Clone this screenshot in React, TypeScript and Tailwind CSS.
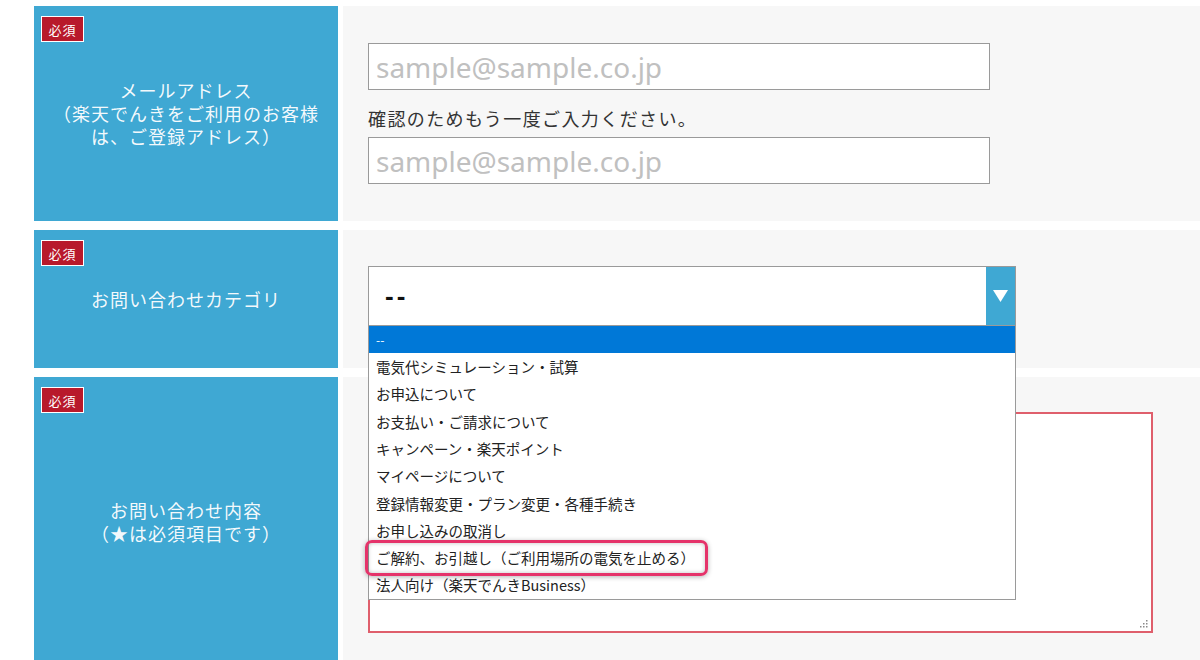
import type { ReactNode } from "react";

const jp = { fontFamily: '"Noto Sans CJK JP", "Noto Sans", sans-serif' };

const categories = [
  "--",
  "電気代シミュレーション・試算",
  "お申込について",
  "お支払い・ご請求について",
  "キャンペーン・楽天ポイント",
  "マイページについて",
  "登録情報変更・プラン変更・各種手続き",
  "お申し込みの取消し",
  "ご解約、お引越し（ご利用場所の電気を止める）",
  "法人向け（楽天でんきBusiness）",
];

function Badge() {
  return (
    <span className="absolute left-[7px] top-[10px] flex h-[26px] w-[43px] items-center justify-center border border-white bg-[#b8192b] text-[13px] text-white">
      必須
    </span>
  );
}

function Row({ label, className, children }: { label: ReactNode; className: string; children: ReactNode }) {
  return (
    <div className={`flex gap-[5px] ${className}`}>
      <div className="relative flex w-[304px] shrink-0 items-center justify-center bg-[#3fa8d3] px-[18px] text-center text-[18px] leading-[23px] tracking-[1px] text-white/95">
        <Badge />
        <p>{label}</p>
      </div>
      <div className="relative flex-1 bg-[#f7f7f7] pl-[25px]">{children}</div>
    </div>
  );
}

function EmailInput() {
  return (
    <input
      readOnly
      placeholder="sample@sample.co.jp"
      className="block h-[47px] w-[622px] border-[1.5px] border-[#9a9a9a] bg-white px-[7px] text-[28px] outline-none placeholder:text-[#c0c0c0]"
      style={{ fontFamily: '"Noto Sans", sans-serif' }}
    />
  );
}

function ResizeGrip() {
  return (
    <svg className="absolute bottom-[3px] right-[3px]" width="10" height="10" viewBox="0 0 10 10">
      {[
        [8, 2],
        [5, 5],
        [8, 5],
        [2, 8],
        [5, 8],
        [8, 8],
      ].map(([x, y]) => (
        <rect key={`${x}-${y}`} x={x} y={y} width="1.5" height="1.5" fill="#8a8a8a" />
      ))}
    </svg>
  );
}

export default function App() {
  return (
    <div className="h-[660px] w-[1200px] overflow-hidden bg-white pl-[34px] pt-[6px]" style={jp}>
      <div className="flex flex-col gap-[9px]">
        <Row
          className="h-[215px]"
          label={
            <>
              メールアドレス
              <br />
              （楽天でんきをご利用のお客様
              <br />
              は、ご登録アドレス）
            </>
          }
        >
          <div className="pt-[37px]">
            <EmailInput />
            <p className="mt-[16px] mb-[7px] text-[18px] leading-[24px] tracking-[1.4px] text-[#333]">
              確認のためもう一度ご入力ください。
            </p>
            <EmailInput />
          </div>
        </Row>

        <Row className="z-10 h-[138px]" label="お問い合わせカテゴリ">
          <div className="relative mt-[36px] w-[648px]">
            <div className="flex h-[60px] border border-[#9a9a9a] bg-white">
              <span
                className="flex flex-1 items-center pl-[16px] text-[26px] font-bold tracking-[3px] text-[#111]"
                style={{ fontFamily: '"Liberation Sans", sans-serif' }}
              >
                --
              </span>
              <span className="flex w-[29px] items-center justify-center bg-[#3fa8d3]">
                <svg width="15" height="12" viewBox="0 0 15 12">
                  <path d="M0 0H15L7.5 12Z" fill="white" />
                </svg>
              </span>
            </div>

            <ul className="absolute left-0 top-[60px] w-[648px] border-x border-b border-[#9a9a9a] bg-white">
              {categories.map((item, i) => (
                <li
                  key={item}
                  className={`flex h-[27.3px] items-center px-[7px] ${
                    i === 0 ? "bg-[#0078d7] text-[12px] text-white" : "text-[14.5px] text-[#222]"
                  }`}
                >
                  {item}
                </li>
              ))}
            </ul>

            <div className="pointer-events-none absolute left-[-3px] top-[274px] h-[36px] w-[343px] rounded-[7px] border-[3px] border-[#e5336a] shadow-[inset_0_0_4px_rgba(0,0,0,0.25),0_1px_5px_rgba(0,0,0,0.3)]" />
          </div>
        </Row>

        <Row
          className="h-[289px]"
          label={
            <>
              お問い合わせ内容
              <br />
              （★は必須項目です）
            </>
          }
        >
          <div className="relative mt-[35px] h-[221px] w-[785px] border-2 border-[#df5f6c] bg-white">
            <ResizeGrip />
          </div>
        </Row>
      </div>
    </div>
  );
}
